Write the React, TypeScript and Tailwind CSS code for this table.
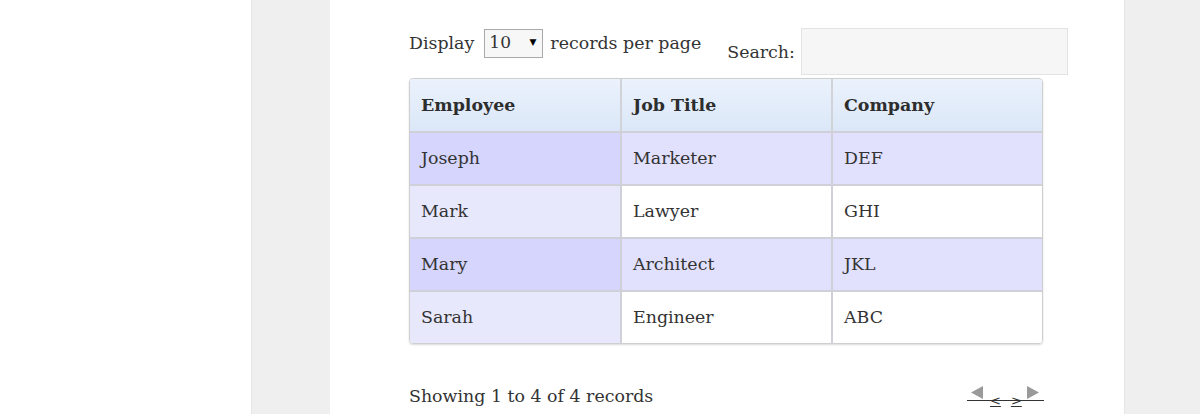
import React from "react";

const rows = [
  ["Joseph", "Marketer", "DEF"],
  ["Mark", "Lawyer", "GHI"],
  ["Mary", "Architect", "JKL"],
  ["Sarah", "Engineer", "ABC"],
];

export default function App() {
  return (
    <div
      className="flex h-[414px] w-[1200px] overflow-hidden bg-white text-[#333]"
      style={{ fontFamily: '"DejaVu Serif", serif' }}
    >
      <div className="w-[251px] shrink-0 bg-white" />
      <div className="w-[79px] shrink-0 border-l border-[#e6e6e6] bg-[#efefef]" />
      <div className="w-[794px] shrink-0 bg-white pl-[79px] pt-[28px]">
        <div className="flex items-start whitespace-nowrap">
          <div className="flex h-[30px] shrink-0 items-center text-[17.4px]">
            <span>Display</span>
            <div className="ml-[10px] flex h-[29px] w-[59px] items-center justify-between border border-[#a9a9a9] bg-[#f7f7f7] pl-[4px] pr-[6px]">
              <span className="text-[17px]">10</span>
              <span className="text-[9px] text-black">▼</span>
            </div>
            <span className="ml-[7px]">records per page</span>
          </div>
          <div className="ml-[26px] flex shrink-0 items-center">
            <span className="text-[17.4px] pt-[2px]">Search:</span>
            <div className="ml-[6px] h-[47px] w-[267px] border border-[#e3e3e3] bg-[#f6f6f6]" />
          </div>
        </div>
        <div className="mt-[3px] w-[634px] overflow-hidden rounded-[4px] border border-[#cfcfcf] shadow-[0_1px_2px_rgba(0,0,0,0.15)]">
          <div className="grid h-[52px] grid-cols-[212px_211px_209px] bg-gradient-to-b from-[#ebf2fc] to-[#dbe7f8] font-bold text-[17.4px] text-[#2d2d2d]">
            <div className="flex items-center border-r-2 border-[#d0d3d8] pl-[11px]">Employee</div>
            <div className="flex items-center border-r-2 border-[#d0d3d8] pl-[11px]">Job Title</div>
            <div className="flex items-center pl-[11px]">Company</div>
          </div>
          {rows.map((r, i) => {
            const odd = i % 2 === 0;
            return (
              <div
                key={i}
                className="grid h-[53px] grid-cols-[212px_211px_209px] border-t-2 border-[#d0d0d8] text-[17.4px]"
              >
                <div
                  className={`flex items-center border-r-2 border-[#d0d0d8] pl-[11px] ${
                    odd ? "bg-[#d5d5fd]" : "bg-[#e8e8fd]"
                  }`}
                >
                  {r[0]}
                </div>
                <div
                  className={`flex items-center border-r-2 border-[#d0d0d8] pl-[11px] ${
                    odd ? "bg-[#e1e1fd]" : "bg-white"
                  }`}
                >
                  {r[1]}
                </div>
                <div className={`flex items-center pl-[11px] ${odd ? "bg-[#e1e1fd]" : "bg-white"}`}>
                  {r[2]}
                </div>
              </div>
            );
          })}
        </div>
        <div className="mt-[39px] flex w-[635px] items-start justify-between">
          <span className="text-[17.4px]">Showing 1 to 4 of 4 records</span>
          <div className="relative mt-[4px] flex h-[20px] w-[77px] items-end">
            <div className="absolute bottom-[6px] left-0 h-px w-full bg-[#333]" />
            <svg width="16" height="14" viewBox="0 0 16 14" className="mb-[7px] ml-[1px]">
              <polygon points="15,0 15,13 3,6.5" fill="#9a9a9a" />
            </svg>
            <span className="ml-[6px] text-[13px] leading-none text-[#333] underline">&lt;</span>
            <span className="ml-[10px] text-[13px] leading-none text-[#333] underline">&gt;</span>
            <svg width="16" height="14" viewBox="0 0 16 14" className="mb-[7px] ml-[4px]">
              <polygon points="1,0 1,13 13,6.5" fill="#9a9a9a" />
            </svg>
          </div>
        </div>
      </div>
      <div className="w-[76px] shrink-0 border-l border-[#e6e6e6] bg-[#efefef]" />
    </div>
  );
}
